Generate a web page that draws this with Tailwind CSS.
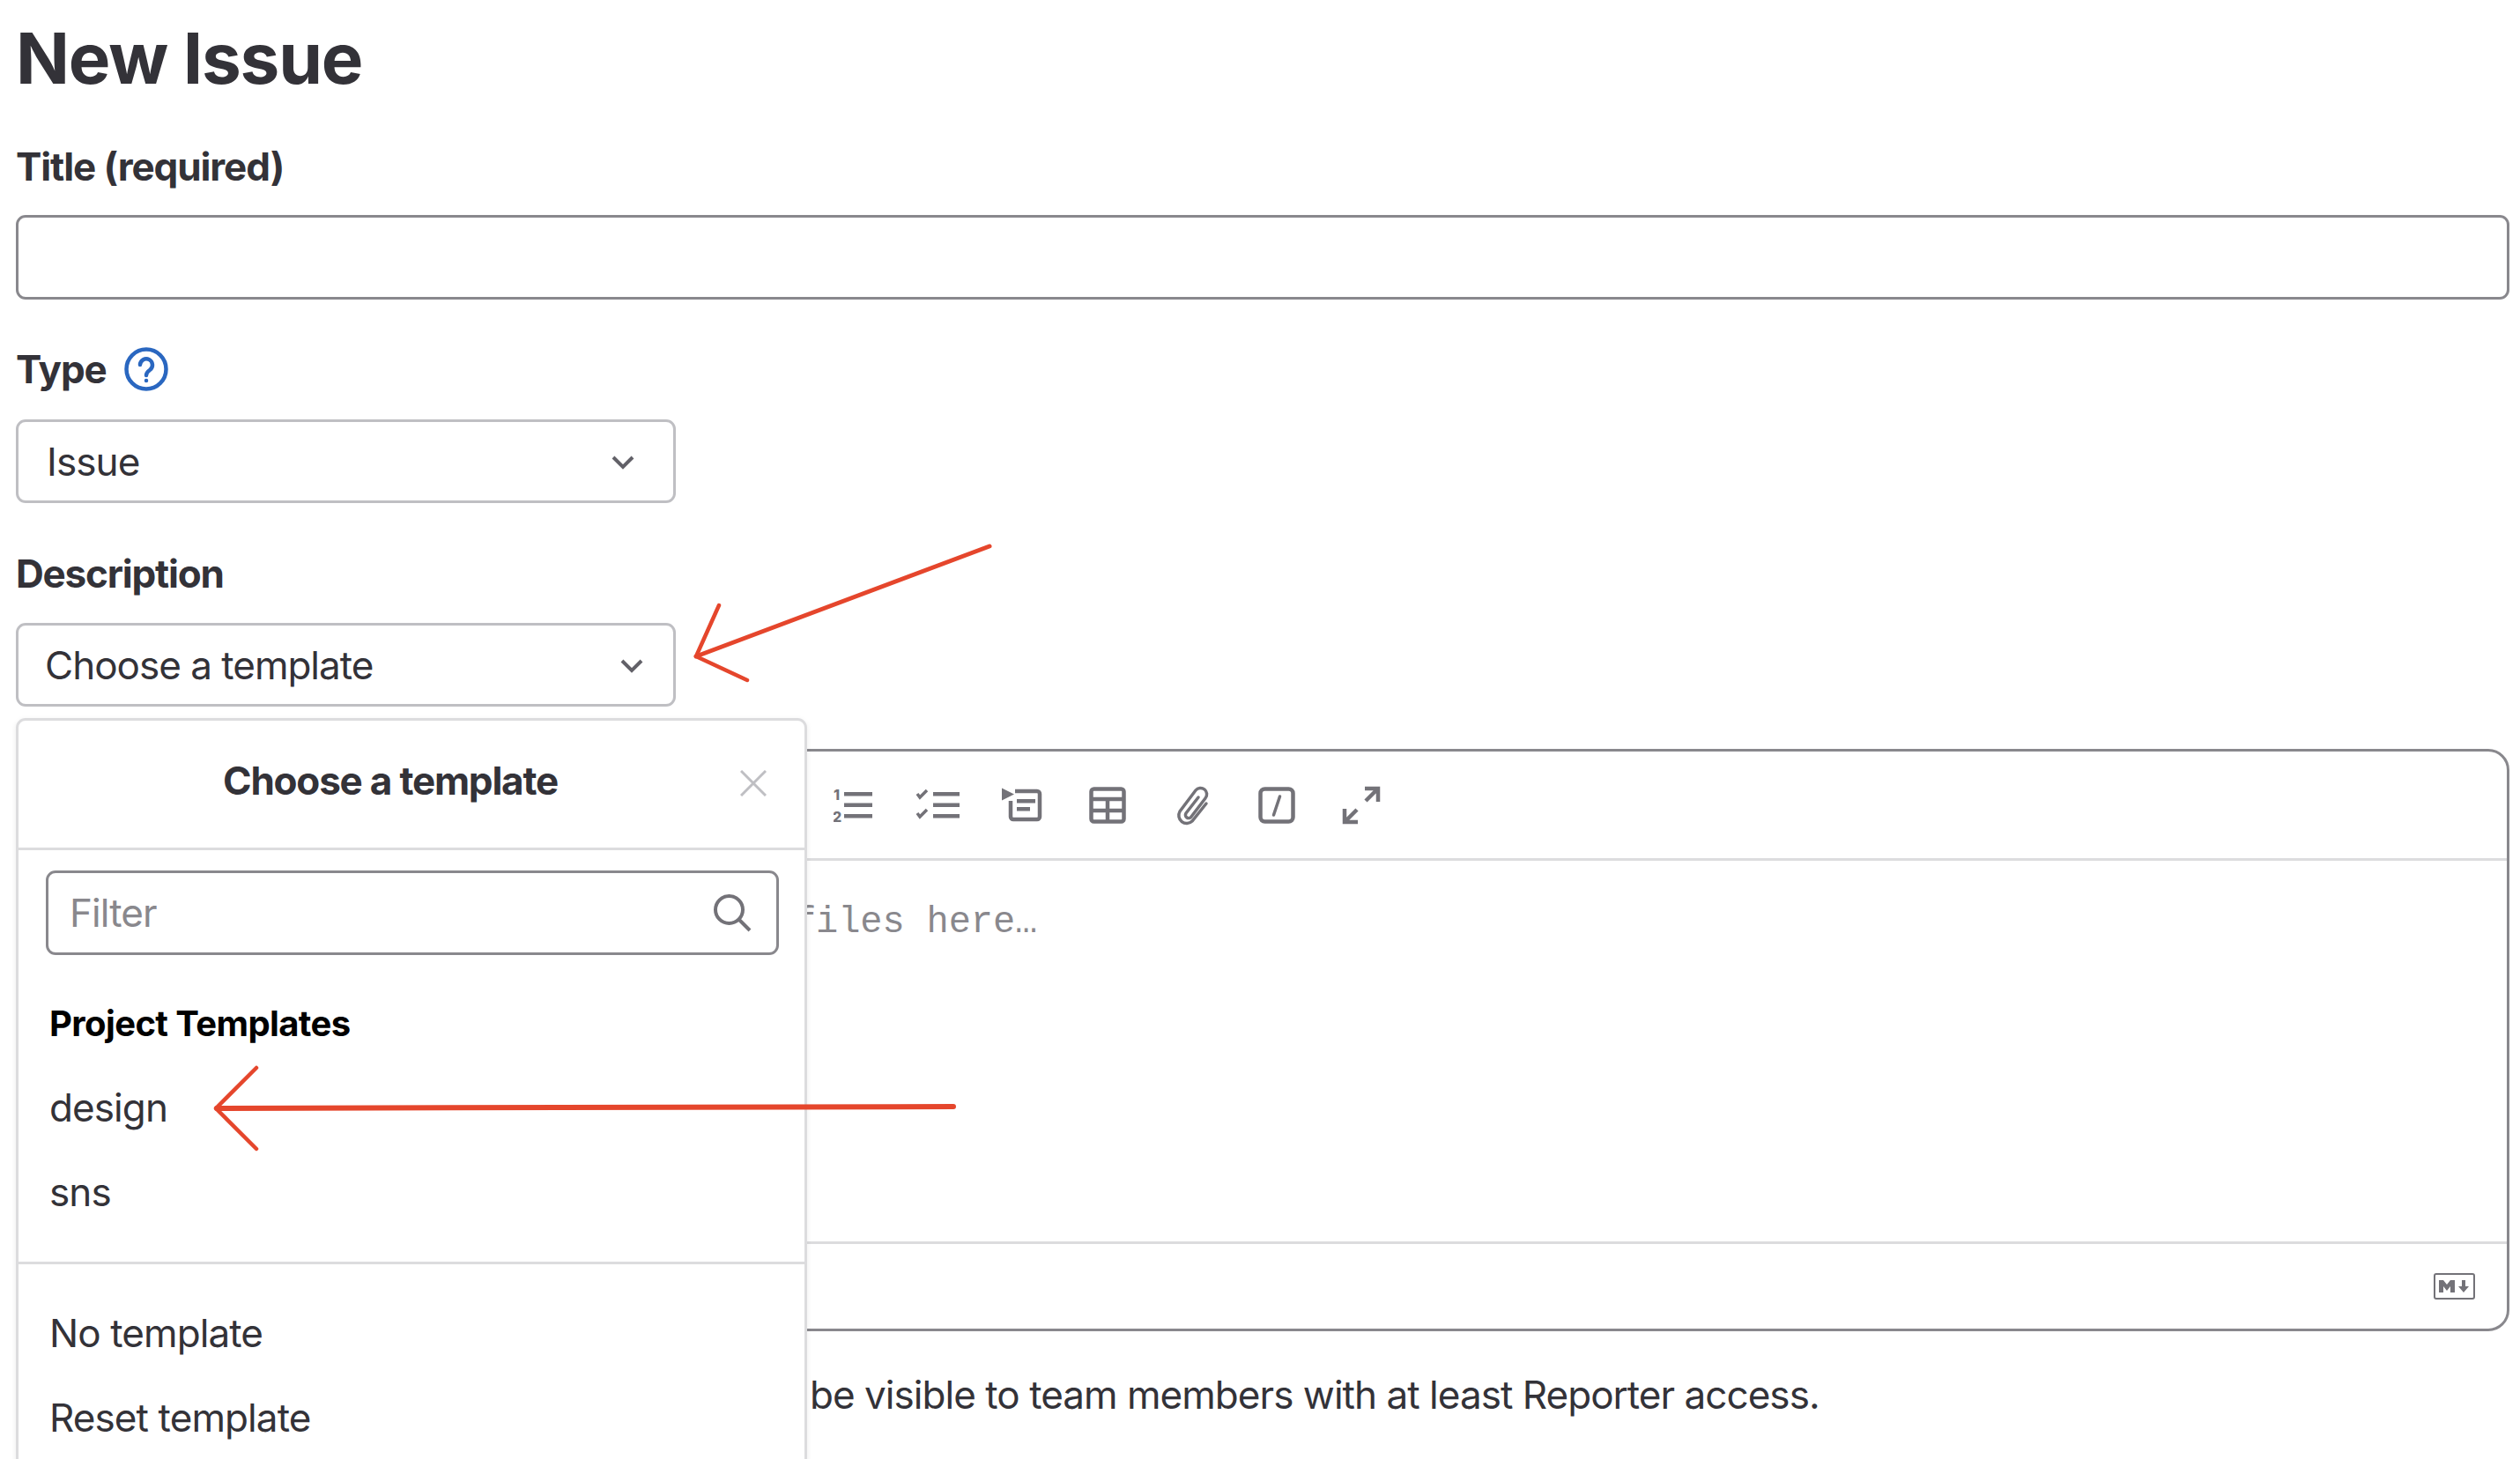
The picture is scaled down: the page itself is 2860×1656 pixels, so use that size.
<!DOCTYPE html>
<html lang="en">
  <head>
    <meta charset="UTF-8" />
    <title>New Issue</title>
    <script src="https://cdn.jsdelivr.net/npm/@tailwindcss/browser@4"></script>
  </head>
  <body class="bg-white font-['Inter',sans-serif] text-[#333238] overflow-hidden">
    <div class="relative h-[1656px] w-[2860px] overflow-hidden px-[18px]">
      <h1 class="h-[161px] pt-[20px] text-[80px] leading-[92px] font-bold tracking-[-1.2px]">New Issue</h1>

      <label class="flex h-[55px] items-center text-[44px] font-bold tracking-[-1.1px]">Title (required)</label>
      <div class="mt-[28px] h-[96px] w-[2830px] rounded-[11px] border-[3px] border-[#89888d]"></div>

      <div class="mt-[51px] flex h-[56px] items-center gap-[20px] text-[44px] font-bold tracking-[-1.1px]">
        <span>Type</span>
        <svg class="h-[50px] w-[50px]" viewBox="0 0 50 50" fill="none" stroke="#2a67c0" stroke-width="4.500">
          <circle cx="25" cy="25" r="22.5" />
          <path d="M18 20a7 7 0 1 1 11 6c-2.500 1.800-4 3-4 6" stroke-linecap="round" />
          <circle cx="25" cy="38" r="1.500" fill="#2a67c0" stroke-width="1.500" />
        </svg>
      </div>
      <div class="mt-[29px] flex h-[95px] w-[749px] items-center justify-between rounded-[11px] border-[3px] border-[#bfbfc3] pr-[42px] pl-[32px] text-[44px] tracking-[-0.9px]">
        <span>Issue</span>
        <svg class="h-[30px] w-[30px]" viewBox="0 0 30 30" fill="none" stroke="#626168" stroke-width="4"><path d="M4 10l11 11 11-11" /></svg>
      </div>

      <label class="mt-[52px] flex h-[56px] items-center text-[44px] font-bold tracking-[-1.2px]">Description</label>
      <div class="mt-[28px] flex h-[95px] w-[749px] items-center justify-between rounded-[11px] border-[3px] border-[#bfbfc3] pr-[32px] pl-[30px] text-[44px] tracking-[-1px]">
        <span>Choose a template</span>
        <svg class="h-[30px] w-[30px]" viewBox="0 0 30 30" fill="none" stroke="#626168" stroke-width="4"><path d="M4 10l11 11 11-11" /></svg>
      </div>

      <!-- editor -->
      <div class="mt-[48px] flex h-[661px] w-[2830px] flex-col rounded-[24px] border-[3px] border-[#89888d]">
        <div class="flex h-[124px] items-center gap-[52px] border-b-[3px] border-[#dcdcde] pl-[925px] text-[#737278]">
          <svg class="h-[44px] w-[44px]" viewBox="0 0 44 44" fill="#737278">
            <text x="0" y="16" font-family="Inter" font-size="16" font-weight="800">1</text>
            <text x="-1" y="41" font-family="Inter" font-size="16" font-weight="800">2</text>
            <path d="M12 7h33v4.500H12zM12 19.500h33v4.500H12zM12 32h33v4.500H12z" />
          </svg>
          <svg class="h-[44px] w-[44px] overflow-visible" viewBox="0 0 44 44" fill="#737278">
            <path d="M-1 9l3 4 8-8M-1 31l3 4 8-8" fill="none" stroke="#737278" stroke-width="3.500" />
            <path d="M17 7h30v4.500H17zM17 19.500h30v4.500H17zM17 32h30v4.500H17z" />
          </svg>
          <svg class="h-[44px] w-[44px] overflow-visible" viewBox="0 0 44 44" fill="#737278">
            <path d="M-1 2.500l14 7-14 7z" />
            <path d="M14 6h25a3 3 0 0 1 3 3v26a3 3 0 0 1-3 3H12a3 3 0 0 1-3-3V17" fill="none" stroke="#737278" stroke-width="4.500" />
            <path d="M16 15h21v4.500H16zM16 24h15v4.500H16z" />
          </svg>
          <svg class="ml-[1px] h-[44px] w-[44px]" viewBox="0 0 44 44" fill="none" stroke="#737278" stroke-width="4.500">
            <rect x="3.500" y="3.500" width="37" height="37" rx="3" />
            <path d="M3.500 15h37M3.500 28h37M22 15v25" />
          </svg>
          <svg class="h-[44px] w-[44px] overflow-visible" viewBox="0 0 44 44" fill="none" stroke="#737278" stroke-width="3.500" stroke-linecap="round">
            <path d="M29 13L15 31a3.500 3.500 0 0 0 6 4L37 14a7 7 0 0 0-11-9L8 29a9 9 0 0 0 14 11L38 20" />
          </svg>
          <svg class="h-[44px] w-[44px]" viewBox="0 0 44 44" fill="none" stroke="#737278" stroke-width="4.500">
            <rect x="3.500" y="3.500" width="37" height="37" rx="5" />
            <path d="M25.500 12l-7 21" stroke-width="3.500" stroke-linecap="round" />
          </svg>
          <svg class="h-[44px] w-[44px]" viewBox="0 0 44 44" fill="none" stroke="#737278" stroke-width="4.500">
            <path d="M26 3h15v15M41 3L27 17" />
            <path d="M18 41H3V26M3 41l14-14" />
          </svg>
        </div>
        <div class="flex-1 pt-[48px] pl-[880px] font-['Liberation_Mono',monospace] text-[42px] leading-[44px] tracking-[-0.1px] text-[#89888d]">files here…</div>
        <div class="flex h-[99px] items-center justify-end border-t-[3px] border-[#dcdcde] pr-[36px]">
          <svg class="h-[30px] w-[47px]" viewBox="0 0 47 30" fill="none">
            <rect x="1" y="1" width="45" height="28" rx="2" stroke="#737278" stroke-width="2" />
            <path d="M6 22V8h5l4 5 4-5h5v14h-5v-7l-4 5-4-5v7z" fill="#737278" />
            <path d="M32 8h4v7h4l-6 7-6-7h4z" fill="#737278" />
          </svg>
        </div>
      </div>

      <p class="mt-[47px] pl-[901px] text-[44px] leading-[50px] tracking-[-0.96px]">be visible to team members with at least Reporter access.</p>

      <!-- template dropdown -->
      <div class="absolute top-[815px] left-[18px] h-[900px] w-[898px] rounded-[11px] border-[3px] border-[#dcdcde] bg-white shadow-[0_2px_6px_rgba(0,0,0,0.08)]">
        <div class="relative flex h-[147px] items-center justify-center border-b-[3px] border-[#dcdcde] pr-[48px] text-[44px] font-bold tracking-[-1.2px]">
          <span class="mt-[-9px]">Choose a template</span>
          <svg class="absolute top-[56px] right-[43px] h-[30px] w-[30px]" viewBox="0 0 30 30" fill="none" stroke="#bfbfc3" stroke-width="3"><path d="M1 1l28 28M29 1L1 29" /></svg>
        </div>
        <div class="px-[31px] pt-[23px]">
          <div class="flex h-[96px] w-[832px] items-center justify-between rounded-[11px] border-[3px] border-[#89888d] pr-[28px] pl-[24px] text-[44px] tracking-[-0.9px] text-[#89888d]">
            <span>Filter</span>
            <svg class="h-[44px] w-[44px]" viewBox="0 0 44 44" fill="none" stroke="#737278" stroke-width="4"><circle cx="18.500" cy="18.500" r="15.500" /><path d="M30 30l12 12" /></svg>
          </div>
        </div>
        <div class="mt-[31px] flex h-[94px] items-center pl-[35px] text-[40px] font-bold tracking-[-0.6px] text-black">Project Templates</div>
        <div class="flex h-[96px] items-center pl-[35px] text-[44px] tracking-[-0.9px]">design</div>
        <div class="flex h-[96px] items-center pl-[35px] text-[44px] tracking-[-0.9px]">sns</div>
        <div class="mt-[31px] border-t-[3px] border-[#dcdcde] pt-[30px]">
          <div class="flex h-[96px] items-center pl-[35px] text-[44px] tracking-[-0.9px]">No template</div>
          <div class="flex h-[96px] items-center pl-[35px] text-[44px] tracking-[-0.9px]">Reset template</div>
        </div>
      </div>

      <!-- annotation arrows -->
      <svg class="absolute top-0 left-0 h-[1656px] w-[2860px]" viewBox="0 0 2860 1656" fill="none" stroke="#e5462c" stroke-linecap="round" stroke-linejoin="round">
        <path d="M1123 620L790 745" stroke-width="5" />
        <path d="M816 687L790 745L848 772" stroke-width="4.500" />
        <path d="M1082 1256L246 1258" stroke-width="6" />
        <path d="M291 1212L245 1258L291 1304" stroke-width="4.500" />
      </svg>
    </div>
  </body>
</html>
